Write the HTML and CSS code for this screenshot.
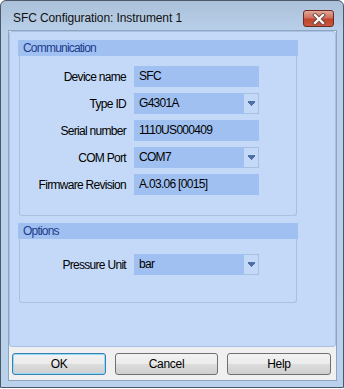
FILE: index.html
```html
<!DOCTYPE html>
<html lang="en">
<head>
    <meta charset="UTF-8">
    <title>SFC Configuration</title>
    <link rel="stylesheet" href="styles.css">
</head>
<body>
    <div class="window">
        <div class="titlebar">
            <span class="title">SFC Configuration: Instrument 1</span>
            <div class="close-btn">
                <svg width="14" height="12" viewBox="0 0 14 12">
                    <path d="M3 2 L11 10 M11 2 L3 10" stroke="#6d4a44" stroke-width="4" stroke-linecap="square"/>
                    <path d="M3 2 L11 10 M11 2 L3 10" stroke="#ffffff" stroke-width="2.2" stroke-linecap="square"/>
                </svg>
            </div>
        </div>
        <div class="client">
            <div class="panel">
                <div class="group">
                    <div class="group-header">Communication</div>
                    <div class="group-body">
                        <div class="row">
                            <label>Device name</label>
                            <div class="field">SFC</div>
                        </div>
                        <div class="row">
                            <label>Type ID</label>
                            <div class="field combo">
                                <span class="value">G4301A</span>
                                <span class="arrow"><svg width="7" height="5" viewBox="0 0 7 5"><path d="M0 0h7v2H0z M1 2h5v1H1z M2 3h3v1H2z M3 4h1v1H3z" fill="#4f6fa6"/></svg></span>
                            </div>
                        </div>
                        <div class="row">
                            <label>Serial number</label>
                            <div class="field">1110US000409</div>
                        </div>
                        <div class="row">
                            <label>COM Port</label>
                            <div class="field combo">
                                <span class="value">COM7</span>
                                <span class="arrow"><svg width="7" height="5" viewBox="0 0 7 5"><path d="M0 0h7v2H0z M1 2h5v1H1z M2 3h3v1H2z M3 4h1v1H3z" fill="#4f6fa6"/></svg></span>
                            </div>
                        </div>
                        <div class="row">
                            <label>Firmware Revision</label>
                            <div class="field">A.03.06 [0015]</div>
                        </div>
                    </div>
                </div>
                <div class="group options">
                    <div class="group-header">Options</div>
                    <div class="group-body">
                        <div class="row">
                            <label>Pressure Unit</label>
                            <div class="field combo">
                                <span class="value">bar</span>
                                <span class="arrow"><svg width="7" height="5" viewBox="0 0 7 5"><path d="M0 0h7v2H0z M1 2h5v1H1z M2 3h3v1H2z M3 4h1v1H3z" fill="#4f6fa6"/></svg></span>
                            </div>
                        </div>
                    </div>
                </div>
            </div>
            <div class="buttons">
                <button class="btn btn-ok default">OK</button>
                <button class="btn btn-cancel">Cancel</button>
                <button class="btn btn-help">Help</button>
            </div>
        </div>
    </div>
</body>
</html>
```

FILE: styles.css
```css
html, body {
    margin: 0;
    background: #ffffff;
}
body {
    font-family: "Liberation Sans", Arial, sans-serif;
    font-size: 12px;
    color: #000;
}
.window {
    width: 344px;
    height: 388px;
    box-sizing: border-box;
    border: 1px solid #4b5868;
    border-radius: 6px 6px 0 0;
    background: linear-gradient(#abc0d9, #b9d0ea 30px, #b9d1ea);
    display: flex;
    flex-direction: column;
}
.titlebar {
    height: 29px;
    display: flex;
    align-items: flex-start;
}
.title {
    flex: 1;
    margin: 10px 0 0 12px;
    line-height: 14px;
    letter-spacing: -0.1px;
    color: #111;
}
.close-btn {
    margin: 9px 9px 0 0;
    width: 31px;
    height: 17px;
    box-sizing: border-box;
    border: 1px solid #6e2a20;
    border-radius: 3px;
    background: linear-gradient(#e3a898, #d0705e 45%, #c0432d 55%, #c8583f);
    display: flex;
    align-items: center;
    justify-content: center;
}
.client {
    flex: 1;
    margin: 0 6px 6px 7px;
    border: 1px solid #8fa4bf;
    background: #f0f0f0;
    display: flex;
    flex-direction: column;
}
.panel {
    flex: 1;
    border: 1px solid #a7c0e3;
    border-radius: 3px;
    background: #c4d9f7;
    padding: 8px 0 0 8px;
}
.group {
    width: 280px;
}
.options {
    margin-top: 7px;
}
.group-header {
    height: 16px;
    line-height: 16px;
    padding-left: 5px;
    background: #a1c0f2;
    color: #1e3c8c;
    letter-spacing: -0.8px;
}
.group-body {
    margin: 0 1px;
    border: 1px solid #a9c0e1;
    border-top: none;
    border-radius: 0 0 3px 3px;
    padding: 10px 0 20px;
    display: flex;
    flex-direction: column;
    gap: 6px;
}
.options .group-body {
    padding: 15px 0 27px;
}
.row {
    display: flex;
    align-items: center;
    gap: 8px;
    height: 21px;
}
.row label {
    width: 106px;
    text-align: right;
    letter-spacing: -0.7px;
}
.field {
    width: 125px;
    height: 21px;
    box-sizing: border-box;
    line-height: 21px;
    padding-left: 5px;
    background: #a1c0f2;
    letter-spacing: -0.7px;
}
.combo {
    display: flex;
    padding-left: 0;
}
.combo .value {
    flex: 1;
    padding-left: 5px;
}
.arrow {
    width: 15px;
    box-sizing: border-box;
    border: 1px solid #a8bfdf;
    border-left: none;
    background: #c4d9f7;
    display: flex;
    align-items: center;
    justify-content: center;
}
.buttons {
    height: 33px;
    box-sizing: border-box;
    padding: 6px 4px 0 3px;
    display: flex;
    align-items: flex-start;
}
.btn {
    height: 22px;
    margin: 0 9px 0 0;
    padding: 0;
    border: 1px solid #707070;
    border-radius: 3px;
    background: linear-gradient(#f2f2f2, #ebebeb 50%, #dddddd 50%, #cfcfcf);
    font-family: "Liberation Sans", Arial, sans-serif;
    font-size: 12px;
    color: #000;
    letter-spacing: -0.3px;
}
.btn-ok {
    width: 94px;
}
.btn-cancel {
    width: 103px;
}
.btn-help {
    width: 104px;
    margin-right: 0;
}
.default {
    border-color: #3c7fb1;
    box-shadow: inset 0 0 0 1px #8fdcf6;
}
```
